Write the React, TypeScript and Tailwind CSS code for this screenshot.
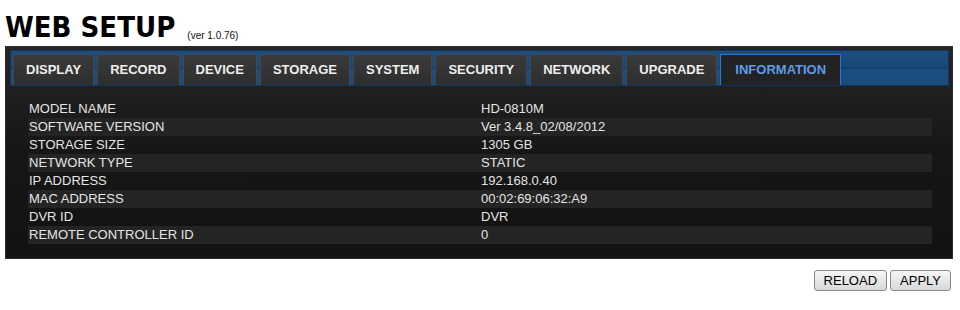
import React from 'react';

const tabs = ['DISPLAY', 'RECORD', 'DEVICE', 'STORAGE', 'SYSTEM', 'SECURITY', 'NETWORK', 'UPGRADE', 'INFORMATION'];

const info: Array<[string, string]> = [
  ['MODEL NAME', 'HD-0810M'],
  ['SOFTWARE VERSION', 'Ver 3.4.8_02/08/2012'],
  ['STORAGE SIZE', '1305 GB'],
  ['NETWORK TYPE', 'STATIC'],
  ['IP ADDRESS', '192.168.0.40'],
  ['MAC ADDRESS', '00:02:69:06:32:A9'],
  ['DVR ID', 'DVR'],
  ['REMOTE CONTROLLER ID', '0'],
];

export default function App() {
  const active = 'INFORMATION';

  return (
    <div className="w-[960px] h-[310px] bg-white font-['Liberation_Sans',Arial,sans-serif]">
      {/* Title */}
      <div className="h-[46px] flex items-end pl-[5px] pb-[4px]">
        <h1 className="font-['DejaVu_Sans_Condensed','DejaVu_Sans',Verdana,sans-serif] [font-stretch:condensed] font-bold text-[29px] leading-none text-black">
          WEB SETUP
        </h1>
        <span className="ml-[12px] mb-[1px] text-[10px] leading-none text-[#111]">(ver 1.0.76)</span>
      </div>

      {/* Main panel */}
      <div className="ml-[5px] w-[948px] h-[213px] border border-[#2c2c2c] bg-gradient-to-b from-[#262626] via-[#161616] to-[#121212] pt-[3px] pl-[4px] pr-[3px]">
        {/* Tab strip */}
        <div className="h-[36px] border border-[#0f3560] bg-[linear-gradient(to_bottom,#1d4d80_0%,#1a4878_45%,#0f3d6e_50%,#1c4e82_55%,#1b4a7c_100%)] flex items-end gap-[3px] pl-[2px]">
          {tabs.map((t) => {
            const isActive = t === active;
            return (
              <div
                key={t}
                className={
                  isActive
                    ? 'h-[31px] px-[14px] flex items-center border border-b-0 border-[#2a78d0] bg-[#222222] text-[#5d9ce8] text-[13px] font-bold'
                    : 'h-[31px] px-[12px] flex items-center border border-b-0 border-[#474747] bg-[linear-gradient(to_bottom,#3a3a3a,#2e2e2e)] text-[#eeeeee] text-[13px] font-bold'
                }
              >
                {t}
              </div>
            );
          })}
        </div>

        {/* Info table */}
        <div className="mt-[14px] ml-[18px] w-[904px]">
          {info.map(([label, value], i) => (
            <div
              key={label}
              className={`h-[18px] flex items-center text-[13px] text-[#e4e4e4] ${i % 2 === 1 ? 'bg-[#242424]' : ''}`}
            >
              <div className="w-[453px] pl-[1px]">{label}</div>
              <div>{value}</div>
            </div>
          ))}
        </div>
      </div>

      {/* Buttons */}
      <div className="flex justify-end gap-[3px] pr-[9px] mt-[11px]">
        <button className="h-[21px] px-[9px] border border-[#8a8a8a] rounded-[3px] bg-gradient-to-b from-[#f6f6f6] to-[#d8d8d8] text-[13px] leading-none text-black">
          RELOAD
        </button>
        <button className="h-[21px] px-[9px] border border-[#8a8a8a] rounded-[3px] bg-gradient-to-b from-[#f6f6f6] to-[#d8d8d8] text-[13px] leading-none text-black">
          APPLY
        </button>
      </div>
    </div>
  );
}
